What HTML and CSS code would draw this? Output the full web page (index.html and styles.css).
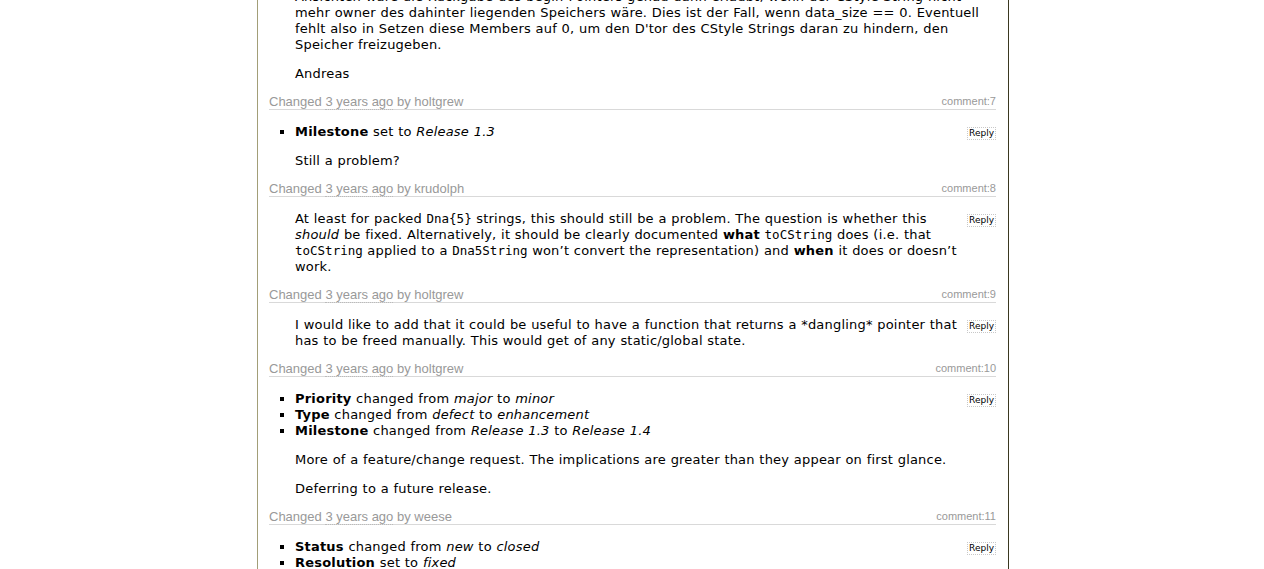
FILE: index.html
```html
<!DOCTYPE html>
<html lang="de">
<head>
<meta charset="utf-8">
<title>Ticket changelog</title>
<link rel="stylesheet" href="styles.css">
</head>
<body>
<div class="changelog">
  <div class="change">
    <div class="change-body">
      <p>Ansichten wäre die Rückgabe des begin-Pointers genau dann erlaubt, wenn der CStyle String nicht mehr owner des dahinter liegenden Speichers wäre. Dies ist der Fall, wenn data_size == 0. Eventuell fehlt also in Setzen diese Members auf 0, um den D'tor des CStyle Strings daran zu hindern, den Speicher freizugeben.</p>
      <p>Andreas</p>
    </div>
  </div>

  <div class="change">
    <h3 class="change-head"><span class="threading">comment:7</span>Changed <span class="ago">3 years ago</span> by holtgrew</h3>
    <div class="change-body">
      <button class="reply" type="button">Reply</button>
      <ul class="changes">
        <li><strong>Milestone</strong> set to <em>Release 1.3</em></li>
      </ul>
      <p>Still a problem?</p>
    </div>
  </div>

  <div class="change">
    <h3 class="change-head"><span class="threading">comment:8</span>Changed <span class="ago">3 years ago</span> by krudolph</h3>
    <div class="change-body">
      <button class="reply" type="button">Reply</button>
      <p>At least for packed <code>Dna{5}</code> strings, this should still be a problem. The question is whether this <em>should</em> be fixed. Alternatively, it should be clearly documented <strong>what</strong> <code>toCString</code> does (i.e. that <code>toCString</code> applied to a <code>Dna5String</code> won’t convert the representation) and <strong>when</strong> it does or doesn’t work.</p>
    </div>
  </div>

  <div class="change">
    <h3 class="change-head"><span class="threading">comment:9</span>Changed <span class="ago">3 years ago</span> by holtgrew</h3>
    <div class="change-body">
      <button class="reply" type="button">Reply</button>
      <p>I would like to add that it could be useful to have a function that returns a *dangling* pointer that has to be freed manually. This would get of any static/global state.</p>
    </div>
  </div>

  <div class="change">
    <h3 class="change-head"><span class="threading">comment:10</span>Changed <span class="ago">3 years ago</span> by holtgrew</h3>
    <div class="change-body">
      <button class="reply" type="button">Reply</button>
      <ul class="changes">
        <li><strong>Priority</strong> changed from <em>major</em> to <em>minor</em></li>
        <li><strong>Type</strong> changed from <em>defect</em> to <em>enhancement</em></li>
        <li><strong>Milestone</strong> changed from <em>Release 1.3</em> to <em>Release 1.4</em></li>
      </ul>
      <p>More of a feature/change request. The implications are greater than they appear on first glance.</p>
      <p>Deferring to a future release.</p>
    </div>
  </div>

  <div class="change">
    <h3 class="change-head"><span class="threading">comment:11</span>Changed <span class="ago">3 years ago</span> by weese</h3>
    <div class="change-body">
      <button class="reply" type="button">Reply</button>
      <ul class="changes">
        <li><strong>Status</strong> changed from <em>new</em> to <em>closed</em></li>
        <li><strong>Resolution</strong> set to <em>fixed</em></li>
      </ul>
    </div>
  </div>
</div>
</body>
</html>
```

FILE: styles.css
```css
html, body {
  margin: 0;
  padding: 0;
  background: #fff;
}

body {
  font-family: "DejaVu Sans", Verdana, sans-serif;
  font-size: 13px;
  line-height: 16px;
  color: #000;
}

.changelog {
  width: 727px;
  margin: -11px 0 0 257px;
  padding: 0 12px 0 11px;
  border-left: 1px solid #a29e78;
  border-right: 1px solid #3a3820;
  min-height: 700px;
}

.change-head {
  margin: 0;
  font-family: "Liberation Sans", Arial, sans-serif;
  font-size: 13px;
  font-weight: normal;
  line-height: 15px;
  color: #999;
  border-bottom: 1px solid #d9d9d9;
}

.ago {
  border-bottom: 1px dotted #bbb;
}

.threading {
  float: right;
  font-size: 11px;
  color: #999;
}

.change-body {
  margin-left: 26px;
  padding: 14px 0 12px;
  letter-spacing: 0.2px;
  word-spacing: 0.3px;
}

.change:first-child .change-body {
  padding-top: 0;
}

.change-body p,
.change-body ul {
  margin: 13px 0;
}

.change-body > p:first-child,
.change-body > .reply + p,
.change-body > .reply + ul {
  margin-top: 0;
}

.change-body > p:last-child,
.change-body > ul:last-child {
  margin-bottom: 0;
}

.changes {
  padding: 0;
  list-style: square;
}

.change-body .reply {
  float: right;
  margin: 3px 0 0 10px;
  padding: 0 1px;
  font-family: "DejaVu Sans", Verdana, sans-serif;
  font-size: 9px;
  line-height: 11px;
  letter-spacing: 0;
  color: #000;
  background: #fff;
  border: 1px dotted #c8c8c8;
}

code {
  font-family: "DejaVu Sans Mono", monospace;
  font-size: 12.5px;
  line-height: 1;
  letter-spacing: 0;
}
```
